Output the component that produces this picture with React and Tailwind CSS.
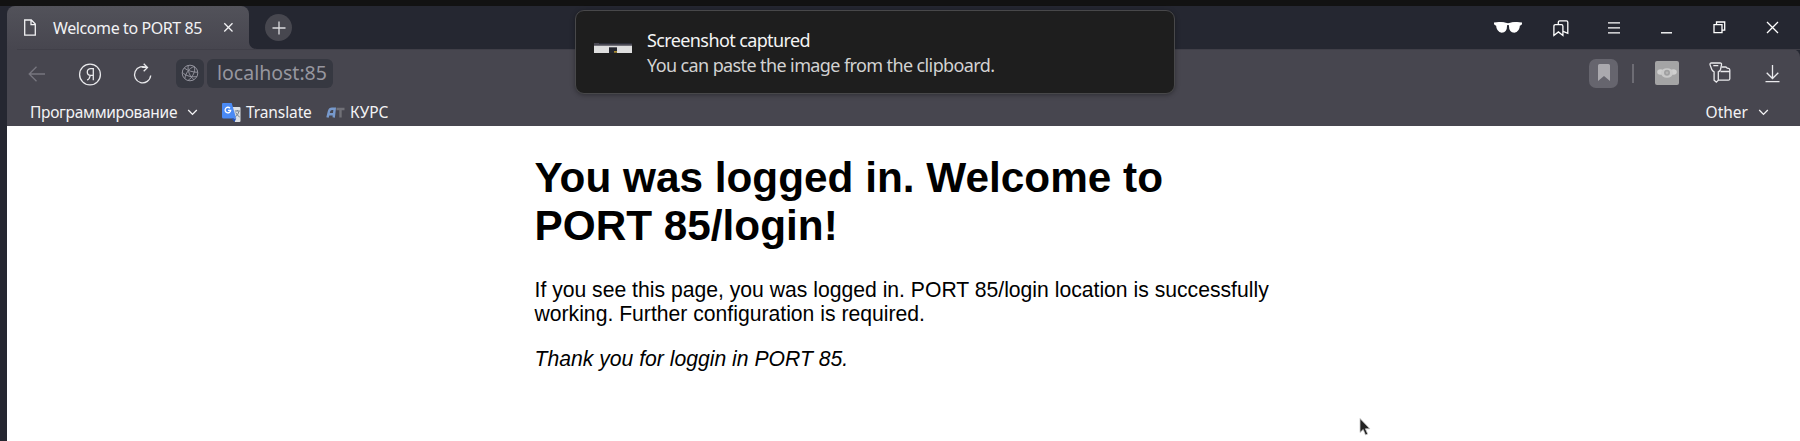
const stroke = { fill: "none", stroke: "currentColor", strokeWidth: 1.3 };

function Chevron() {
  return (
    <svg className="h-[7px] w-[11px]" viewBox="0 0 11 7" {...stroke}>
      <path d="M1.2 1 5.5 5.4 9.8 1" />
    </svg>
  );
}

function TabStrip() {
  return (
    <div className="flex h-[43px] bg-[#252731]">
      <div className="relative flex h-[43px] w-[242px] items-center rounded-t-lg bg-linear-to-b from-[#52525a] to-[#47464f] text-[#f2f2f4]">
        <svg className="ml-[16px] h-[18px] w-[14px] shrink-0" viewBox="0 0 14 18" {...stroke}>
          <path d="M1.7 1h6.6l4 4v11.2H1.7zM8 1v4.6h4.3" />
        </svg>
        <span className="ml-[16px] w-[151px] text-[16px] tracking-[-0.4px] whitespace-nowrap">Welcome to PORT 85</span>
        <svg className="ml-[19px] h-[11px] w-[11px]" viewBox="0 0 11 11" {...stroke}>
          <path d="m1.3 1.3 8.2 8.2M9.5 1.3 1.3 9.5" />
        </svg>
        <svg className="absolute bottom-0 left-full h-[8px] w-[8px]" viewBox="0 0 8 8">
          <path d="M0 0v8h8C3 8 0 5 0 0" fill="#47464f" />
        </svg>
      </div>
      <div className="mt-[8px] ml-[16px] flex h-[27px] w-[27px] items-center justify-center rounded-full bg-[#47474f] text-[#dcdcdf]">
        <svg className="h-[14px] w-[14px]" viewBox="0 0 14 14" {...stroke}>
          <path d="M7 .5v13M.5 7h13" />
        </svg>
      </div>
      <div className="ml-auto flex h-[43px] pt-[12px] text-white">
        <svg className="mt-[3px] mr-[31px] h-[13px] w-[28px]" viewBox="0 0 28 13" fill="#fff">
          <path d="M0 1.500Q7 .3 14 2.300 21 .3 28 1.500v1.700l-1.500 1.200h-10L14 3.900l-2.500.5h-10L0 3.200z" />
          <path d="M1.800 2.500Q7.500-.2 13 2.800 13.700 11.700 7.700 11.700 2.500 11.700 1.800 2.500zM26.200 2.500Q20.500-.2 15 2.800 14.300 11.700 20.300 11.700 25.500 11.700 26.200 2.500z" />
        </svg>
        <svg className="mt-[2px] mr-[39px] h-[17px] w-[16px]" viewBox="0 0 16 17" {...stroke}>
          <path d="M.9 15.400V6.200q0-1.500 1.500-1.500h6q1.500 0 1.500 1.500v9.200l-4.500-3.500z" />
          <path d="M5.300 4.500V2.300Q5.300.9 6.700.9h6.700q1.400 0 1.400 1.400v11l-4.700-2" />
        </svg>
        <svg className="mt-[4px] mr-[41px] h-[12px] w-[12px]" viewBox="0 0 12 12" {...stroke}>
          <path d="M0 .9h12M0 5.900h12M0 10.900h12" />
        </svg>
        <svg className="mt-[13px] mr-[41px] h-[3px] w-[11px]" viewBox="0 0 11 3">
          <path d="M0 1.100h11v1.400H0z" fill="#fff" />
        </svg>
        <svg className="mt-[3px] mr-[40px] h-[13px] w-[13px]" viewBox="0 0 13 13" {...stroke}>
          <path d="M1 3.600h8v8H1zM3.500 3.300V1h8.200v8.200H9.300" />
        </svg>
        <svg className="mt-[3px] mr-[21px] h-[13px] w-[13px]" viewBox="0 0 13 13" {...stroke}>
          <path d="m1 1 11 11M12 1 1 12" />
        </svg>
      </div>
    </div>
  );
}

function Toolbar() {
  return (
    <div className="flex h-[50px] pt-[10px] text-[#e9e9ec]">
      <svg className="mt-[7px] ml-[21px] h-[16px] w-[18px] text-[#77767f]" viewBox="0 0 18 16" {...stroke}>
        <path d="M17 8H1.2M8.500 .8 1.200 8l7.300 7.200" />
      </svg>
      <svg className="mt-[4px] ml-[32px] h-[23px] w-[24px]" viewBox="0 0 24 23" {...stroke}>
        <circle cx="12" cy="11.500" r="10.400" />
        <path d="M15.300 17.300V5.700h-2.500c-2 0-3.500 1.200-3.500 3.300s1.400 3.400 3.300 3.400h2.700M12.200 12.500c-.6 1.600-.8 4.400-3.200 4.400" />
      </svg>
      <svg className="mt-[4px] ml-[31px] h-[22px] w-[19px]" viewBox="0 0 19 22" {...stroke}>
        <path d="M17.700 12.500A8.100 8.100 0 1 1 14 4.900M9.200 4.400h5.200M10.700.8l3.800 3.700-3.800 3.800" />
      </svg>
      <div className="ml-[24px] flex h-[29px] w-[28px] items-center justify-center rounded-[6px] bg-[#363841] text-[#92929c]">
        <svg className="-mt-[2px] h-[18px] w-[18px]" viewBox="0 0 18 18" fill="none" stroke="currentColor" strokeWidth="1">
          <circle cx="9" cy="9" r="7.800" />
          <path d="M3.800 14.800C4.500 9.500 8 4 13.300 2.500M13.300 2.500C15 7 11.500 13.500 7 16.500M7.200 1.400C6.500 6.500 8.500 12.500 13 15.700M1.300 8.200c3 3.800 10 5.300 14.600 4.300M3.200 4c3.500 2.800 8.500 4.200 13.400 4.300" />
        </svg>
      </div>
      <div className="ml-[3px] flex h-[29px] w-[126px] items-center rounded-[6px] bg-[#363841] pb-[1px] pl-[10px] text-[19.500px] whitespace-nowrap text-[#96969f]">
        localhost:85
      </div>
      <div className="ml-auto flex">
        <div className="flex h-[29px] w-[29px] items-center justify-center rounded-[7px] bg-[#66656e]">
          <svg className="-mt-[2px] h-[17px] w-[12px]" viewBox="0 0 12 17">
            <path d="M0 1.500Q0 0 1.500 0h9Q12 0 12 1.500V17l-6-5-6 5z" fill="#aaa9ae" />
          </svg>
        </div>
        <div className="mt-[5px] ml-[14px] h-[19px] w-[2px] bg-[#6d6c74]" />
        <svg className="mt-[2px] ml-[21px] h-[24px] w-[24px]" viewBox="0 0 24 24">
          <rect width="24" height="24" rx="2" fill="#a4a4a5" />
          <ellipse cx="5.500" cy="11" rx="3.300" ry="2.800" fill="#cfcfcf" />
          <ellipse cx="18.500" cy="11" rx="3.300" ry="2.800" fill="#cfcfcf" />
          <ellipse cx="12" cy="12" rx="6" ry="4.800" fill="#c9c9c9" />
          <circle cx="12" cy="11.800" r="3" fill="#a0a0a1" />
          <circle cx="12" cy="11.800" r="1.300" fill="#b5b5b5" />
        </svg>
        <svg className="mt-[3px] ml-[30px] h-[21px] w-[22px]" viewBox="0 0 22 21" {...stroke}>
          <path d="M2.500 1h8.500q1.800 0 1.500 1.800L11.500 7.500q-.4 1.600-2.200 2.300v8.400l-2 1.900-2.200-1.900V9.800Q3.300 9 2.800 7.500L1 2.600Q.8 1 2.500 1zM4.300 3.700h5" />
          <path d="M12.500 5h4q1.200 0 1.700 1.200l1.300.2q1.300.2 1.300 1.500v8.800q0 1.500-1.500 1.500H9.500M11.500 9.500h9" />
        </svg>
        <svg className="mt-[5px] mr-[20px] ml-[34px] h-[19px] w-[15px]" viewBox="0 0 15 19" {...stroke}>
          <path d="M7.500 1v13.300M1.700 8.800l5.800 5.700 5.800-5.700M.5 17.700h14" />
        </svg>
      </div>
    </div>
  );
}

function Bookmarks() {
  return (
    <div className="flex h-[27px] items-center text-[15.500px] whitespace-nowrap text-[#f3f3f5]">
      <span className="ml-[23px] w-[148px] tracking-[-0.300px]">Программирование</span>
      <span className="ml-[9px] flex">
        <Chevron />
      </span>
      <svg className="ml-[24px] h-[19px] w-[19px]" viewBox="0 0 19 19">
        <path d="M8 4h9.500q1 0 1 1v13q0 1-1 1H13z" fill="#dcdfe3" />
        <path d="M1 0h8.700l4.500 15.500H1.500Q0 15.500 0 14V1.200Q0 0 1 0z" fill="#4a8af5" />
        <path d="m9.500 15.500h4.700L12.500 19z" fill="#2352b8" />
        <path d="M8 5.200A2.800 2.800 0 1 0 8.700 7.300H6" fill="none" stroke="#fff" strokeWidth="1.300" />
        <path d="M12.800 8h5M15.300 7v1M17 8.300q-.8 3.500-3.500 5.500M13.700 9.500q1.300 3 4 4.500" fill="none" stroke="#72808f" />
      </svg>
      <span className="ml-[5px] w-[66px] tracking-[-0.100px]">Translate</span>
      <svg className="ml-[14px] h-[11px] w-[19px]" viewBox="0 0 19 11" fill="none" strokeWidth="2.400">
        <path d="M1.500 10.500 3 4.300Q3.700 1.700 6 1.700h2.700L7.700 10.500M2.500 7.300H8" stroke="#7799cc" />
        <path d="M10.500 2h8M14.500 2v8.500" stroke="#707077" />
      </svg>
      <span className="ml-[5px]">КУРС</span>
      <span className="mr-[10px] ml-auto">Other</span>
      <span className="mr-[31px] flex">
        <Chevron />
      </span>
    </div>
  );
}

function Notification() {
  return (
    <div className="absolute top-[10px] left-[575px] flex h-[84px] w-[600px] rounded-[9px] border border-[#48484a] bg-[#1e1e1e] shadow-[0_1px_5px_rgba(0,0,0,0.35)]">
      <svg className="mt-[32px] ml-[18px] h-[10px] w-[38px]" viewBox="0 0 38 10">
        <path d="M0 0h38v10H0z" fill="#dedede" />
        <path d="M0 0h38v2.700H0z" fill="#4b4a54" />
        <path d="M5 0h33v1H5z" fill="#2b2d37" />
        <path d="M15 4.300h8V10h-8z" fill="#24262e" />
        <path d="M20 8.300h3v1.200h-3z" fill="#e0b52d" />
      </svg>
      <div className="mt-[17px] ml-[15px] text-[18px] leading-[25px] tracking-[-0.610px] whitespace-nowrap">
        <div className="text-[#f4f4f4]">Screenshot captured</div>
        <div className="text-[#d2d2d2]">You can paste the image from the clipboard.</div>
      </div>
    </div>
  );
}

export default function App() {
  return (
    <div className="relative h-[441px] w-[1800px] overflow-hidden bg-[#252731] font-['Noto_Sans',sans-serif]">
      <div className="h-[6px] bg-[#121212]" />
      <div className="ml-[7px] h-[435px] bg-white">
        <TabStrip />
        <div className="h-[77px] bg-[#252731]">
          <div className="h-[77px] rounded-tr-[8px] bg-[#47464f]">
            <div className="ml-[10px] h-px bg-[#403f48]" />
            <div className="-mt-px">
              <Toolbar />
              <Bookmarks />
            </div>
          </div>
        </div>
        <main className="ml-[527.500px] w-[740px] pt-[28px] font-['Liberation_Sans',Arial,sans-serif] text-[21.160px] leading-[24px] text-black">
          <h1 className="text-[42.320px] leading-[48px] font-bold">You was logged in. Welcome to PORT 85/login!</h1>
          <p className="mt-[28px]">
            If you see this page, you was logged in. PORT 85/login location is successfully working. Further
            configuration is required.
          </p>
          <p className="mt-[21px] italic">Thank you for loggin in PORT 85.</p>
        </main>
      </div>
      <Notification />
      <svg className="absolute top-[417px] left-[1359px] h-[20px] w-[13px]" viewBox="0 0 13 20">
        <path d="M1 1.500v14l3.200-3 2.300 5.500 2.200-1-2.300-5.200h4.500z" fill="#222" stroke="#c8c8c8" strokeWidth=".8" />
      </svg>
    </div>
  );
}
